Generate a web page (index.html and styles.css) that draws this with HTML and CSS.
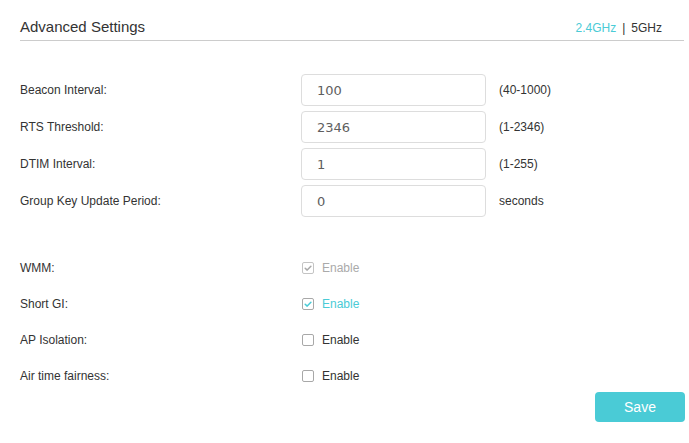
FILE: index.html
```html
<!DOCTYPE html>
<html lang="en">
<head>
<meta charset="utf-8">
<title>Advanced Settings</title>
<link rel="stylesheet" href="styles.css">
</head>
<body>
<div class="page">
  <div class="header">
    <h1 class="title">Advanced Settings</h1>
    <div class="bands">
      <span class="band active">2.4GHz</span><span class="sep">|</span><span class="band">5GHz</span>
    </div>
  </div>

  <div class="fields">
    <div class="row">
      <label class="label">Beacon Interval:</label>
      <div class="input">100</div>
      <span class="hint">(40-1000)</span>
    </div>
    <div class="row">
      <label class="label">RTS Threshold:</label>
      <div class="input">2346</div>
      <span class="hint">(1-2346)</span>
    </div>
    <div class="row">
      <label class="label">DTIM Interval:</label>
      <div class="input">1</div>
      <span class="hint">(1-255)</span>
    </div>
    <div class="row">
      <label class="label">Group Key Update Period:</label>
      <div class="input">0</div>
      <span class="hint">seconds</span>
    </div>
  </div>

  <div class="checks">
    <div class="crow">
      <span class="label">WMM:</span>
      <span class="check disabled">
        <span class="box"><svg viewBox="0 0 12 12" width="12" height="12"><path d="M3.2 6.2 L5.2 8.1 L8.9 4.2" fill="none" stroke="#a8a8a8" stroke-width="1.5" stroke-linecap="round" stroke-linejoin="round"/></svg></span>
        <span class="ctext">Enable</span>
      </span>
    </div>
    <div class="crow">
      <span class="label">Short GI:</span>
      <span class="check on">
        <span class="box"><svg viewBox="0 0 12 12" width="12" height="12"><path d="M3.2 6.2 L5.2 8.1 L8.9 4.2" fill="none" stroke="#4acbd6" stroke-width="1.5" stroke-linecap="round" stroke-linejoin="round"/></svg></span>
        <span class="ctext">Enable</span>
      </span>
    </div>
    <div class="crow">
      <span class="label">AP Isolation:</span>
      <span class="check">
        <span class="box"></span>
        <span class="ctext">Enable</span>
      </span>
    </div>
    <div class="crow">
      <span class="label">Air time fairness:</span>
      <span class="check">
        <span class="box"></span>
        <span class="ctext">Enable</span>
      </span>
    </div>
  </div>

  <div class="footer">
    <button class="save">Save</button>
  </div>
</div>
</body>
</html>
```

FILE: styles.css
```css
html, body {
  margin: 0;
  padding: 0;
  background: #ffffff;
}

body {
  font-family: "Liberation Sans", Arial, sans-serif;
  color: #333333;
}

.page {
  padding: 0 5px 0 20px;
}

.header {
  display: flex;
  justify-content: space-between;
  align-items: baseline;
  padding-top: 18px;
  padding-bottom: 4px;
  border-bottom: 1px solid #cccccc;
}

.title {
  margin: 0;
  font-size: 15px;
  font-weight: normal;
  line-height: 18px;
  color: #333333;
}

.bands {
  font-size: 12px;
  line-height: 14px;
  margin-right: 22px;
  color: #333333;
}

.band.active {
  color: #4acbd6;
}

.sep {
  margin: 0 6px;
}

.fields {
  margin-top: 33px;
  display: flex;
  flex-direction: column;
  gap: 5px;
}

.row {
  display: flex;
  align-items: center;
  height: 32px;
}

.label {
  width: 281px;
  flex: none;
  font-size: 12px;
  color: #333333;
}

.input {
  box-sizing: border-box;
  width: 185px;
  height: 32px;
  border: 1px solid #dddddd;
  border-radius: 4px;
  padding: 0 15px;
  display: flex;
  align-items: center;
  font-family: "DejaVu Sans", Verdana, sans-serif;
  font-size: 13px;
  color: #5e5e5e;
}

.hint {
  margin-left: 13px;
  font-size: 12px;
  color: #333333;
}

.checks {
  margin-top: 33px;
  display: flex;
  flex-direction: column;
}

.crow {
  display: flex;
  align-items: center;
  height: 36px;
}

.check {
  display: flex;
  align-items: center;
  font-size: 12px;
  color: #333333;
}

.box {
  box-sizing: border-box;
  width: 12px;
  height: 12px;
  margin-left: 1px;
  margin-right: 8px;
  border: 1px solid #a8a8a8;
  border-radius: 2px;
  background: #ffffff;
  display: flex;
  align-items: center;
  justify-content: center;
}

.box svg {
  display: block;
  flex: none;
}

.check.disabled .box {
  border-color: #c4c4c4;
}

.check.disabled .ctext {
  color: #aaaaaa;
}

.check.on .ctext {
  color: #4acbd6;
}

.footer {
  display: flex;
  justify-content: flex-end;
  margin-top: -2px;
}

.save {
  width: 90px;
  height: 30px;
  border: none;
  border-radius: 4px;
  background: #4acbd6;
  color: #ffffff;
  font-family: "Liberation Sans", Arial, sans-serif;
  font-size: 14px;
  margin-right: -1px;
  padding: 0;
}
```
